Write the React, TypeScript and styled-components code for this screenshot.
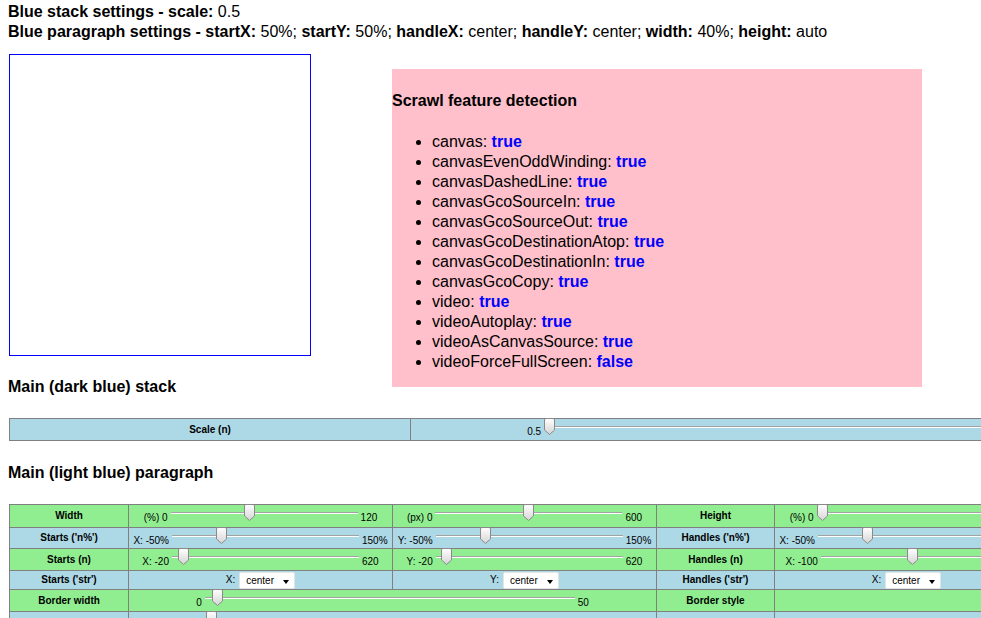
import React from "react";
import styled, { createGlobalStyle } from "styled-components";

const GlobalStyle = createGlobalStyle`
  html, body { margin: 0; padding: 0; background: #fff; overflow: hidden; }
  body { font-family: "Liberation Sans", Arial, sans-serif; color: #000; }
`;

const Page = styled.div`
  padding: 2px 8px 0;
`;

const Settings = styled.div`
  font-size: 16px;
  line-height: 20px;
  white-space: nowrap;
`;

const Key = styled.b`
  font-weight: bold;
`;

const CanvasRow = styled.div`
  display: flex;
  align-items: flex-start;
  height: 302px;
  margin-top: 12px;
`;

const Canvas = styled.div`
  width: 302px;
  height: 302px;
  box-sizing: border-box;
  border: 1px solid #0000ff;
  margin-left: 1px;
  flex-shrink: 0;
`;

const FeaturePanel = styled.div`
  flex-shrink: 0;
  width: 530px;
  margin: 15px 0 0 81px;
  padding: 22px 0 15px;
  background: #ffc0cb;
  font-size: 16px;
`;

const PanelTitle = styled.h4`
  margin: 0 0 21px;
  font-size: 16px;
  line-height: 20px;
  font-weight: bold;
`;

const FeatureList = styled.ul`
  margin: 0;
  padding-left: 40px;
  list-style: disc;
`;

const FeatureItem = styled.li`
  line-height: 20px;
`;

const Flag = styled.b`
  color: #0000ff;
`;

const SectionTitle = styled.h4<{ $before?: number; $after?: number }>`
  margin: ${(p) => p.$before ?? 21}px 0 ${(p) => p.$after ?? 21}px;
  font-size: 16px;
  line-height: 20px;
  font-weight: bold;
  white-space: nowrap;
`;

const ControlGrid = styled.div<{ $cols: string; $rows: string }>`
  display: grid;
  grid-template-columns: ${(p) => p.$cols};
  grid-template-rows: ${(p) => p.$rows};
  width: max-content;
  margin-left: 1px;
  border-top: 1px solid #808080;
  border-left: 1px solid #808080;
  font-size: 10px;
`;

const Cell = styled.div<{ $tone: "green" | "blue"; $span?: number; $slider?: boolean }>`
  box-sizing: border-box;
  grid-column: span ${(p) => p.$span ?? 1};
  display: flex;
  justify-content: center;
  align-items: ${(p) => (p.$slider ? "flex-start" : "center")};
  background: ${(p) => (p.$tone === "green" ? "#90ee90" : "#add8e6")};
  border-right: 1px solid #808080;
  border-bottom: 1px solid #808080;
  white-space: nowrap;
  min-width: 0;
`;

const LabelText = styled.span`
  font-weight: bold;
  font-size: 10px;
  line-height: 12px;
`;

const RangeText = styled.span`
  font-size: 10px;
  line-height: 12px;
  margin-top: 7px;
`;

const SliderBox = styled.div<{ $w: number }>`
  position: relative;
  flex-shrink: 0;
  width: ${(p) => p.$w}px;
  height: 17px;
  margin: -1px 3px 0;
`;

const Track = styled.div`
  position: absolute;
  left: 0;
  right: 0;
  top: 8px;
  height: 1px;
  background: #a3a3a3;
  border-bottom: 1px solid #ffffff;
`;

const ThumbIcon = styled.svg`
  position: absolute;
  top: 0;
  display: block;
`;

const AxisText = styled.span`
  font-size: 10px;
  line-height: 12px;
`;

const SelectBox = styled.div`
  display: flex;
  align-items: center;
  justify-content: space-between;
  box-sizing: border-box;
  width: 56px;
  height: 17px;
  margin: 1px 0 0 4px;
  padding: 0 5px 0 6px;
  background: #fff;
  border: 1px solid #e4e4e4;
  border-radius: 2px;
  font-size: 10px;
`;

const Caret = styled.span`
  width: 0;
  height: 0;
  margin-top: 3px;
  border-left: 3.5px solid transparent;
  border-right: 3.5px solid transparent;
  border-top: 4px solid #000;
`;

const THUMB_W = 11;

function Slider({ width, value }: { width: number; value: number }) {
  const left = value * (width - THUMB_W);
  return (
    <SliderBox $w={width}>
      <Track />
      <ThumbIcon width="11" height="17" viewBox="0 0 11 17" style={{ left }}>
        <defs>
          <linearGradient id="thumbFill" x1="0" y1="0" x2="0" y2="1">
            <stop offset="0" stopColor="#ffffff" />
            <stop offset="1" stopColor="#d4d4d4" />
          </linearGradient>
        </defs>
        <path
          d="M2 .5h7a1.5 1.5 0 0 1 1.5 1.5v10L5.5 16.5.5 12V2A1.5 1.5 0 0 1 2 .5z"
          fill="url(#thumbFill)"
          stroke="#8a8a8a"
        />
      </ThumbIcon>
    </SliderBox>
  );
}

type Tone = "green" | "blue";

function SliderCell({
  tone,
  min,
  max,
  value,
  width = 187,
  span,
}: {
  tone: Tone;
  min: string;
  max: string;
  value: number;
  width?: number;
  span?: number;
}) {
  return (
    <Cell $tone={tone} $slider $span={span}>
      <RangeText>{min}</RangeText>
      <Slider width={width} value={value} />
      <RangeText>{max}</RangeText>
    </Cell>
  );
}

function LabelCell({ tone, children }: { tone: Tone; children: React.ReactNode }) {
  return (
    <Cell $tone={tone}>
      <LabelText>{children}</LabelText>
    </Cell>
  );
}

function SelectCell({ tone, axis }: { tone: Tone; axis: string }) {
  return (
    <Cell $tone={tone}>
      <AxisText>{axis}:</AxisText>
      <SelectBox>
        <span>center</span>
        <Caret />
      </SelectBox>
    </Cell>
  );
}

const features: [string, boolean][] = [
  ["canvas", true],
  ["canvasEvenOddWinding", true],
  ["canvasDashedLine", true],
  ["canvasGcoSourceIn", true],
  ["canvasGcoSourceOut", true],
  ["canvasGcoDestinationAtop", true],
  ["canvasGcoDestinationIn", true],
  ["canvasGcoCopy", true],
  ["video", true],
  ["videoAutoplay", true],
  ["videoAsCanvasSource", true],
  ["videoForceFullScreen", false],
];

export default function App() {
  return (
    <>
      <GlobalStyle />
      <Page>
        <Settings>
          <div>
            <Key>Blue stack settings - scale:</Key> 0.5
          </div>
          <div>
            <Key>Blue paragraph settings - startX:</Key> 50%; <Key>startY:</Key> 50%;{" "}
            <Key>handleX:</Key> center; <Key>handleY:</Key> center; <Key>width:</Key> 40%;{" "}
            <Key>height:</Key> auto
          </div>
        </Settings>

        <CanvasRow>
          <Canvas />
          <FeaturePanel>
            <PanelTitle>Scrawl feature detection</PanelTitle>
            <FeatureList>
              {features.map(([name, ok]) => (
                <FeatureItem key={name}>
                  {name}: <Flag>{ok ? "true" : "false"}</Flag>
                </FeatureItem>
              ))}
            </FeatureList>
          </FeaturePanel>
        </CanvasRow>

        <SectionTitle>Main (dark blue) stack</SectionTitle>
        <ControlGrid $cols="401px 899px" $rows="22px">
          <LabelCell tone="blue">Scale (n)</LabelCell>
          <SliderCell tone="blue" min="0.5" max="5" value={0} width={640} />
        </ControlGrid>

        <SectionTitle $before={22} $after={21}>Main (light blue) paragraph</SectionTitle>
        <ControlGrid
          $cols="119px 264px 264px 118px 264px 264px"
          $rows="23px 21px 22px 19px 22px 22px"
        >
          <LabelCell tone="green">Width</LabelCell>
          <SliderCell tone="green" min="(%) 0" max="120" value={50 / 120} />
          <SliderCell tone="green" min="(px) 0" max="600" value={0.5} />
          <LabelCell tone="green">Height</LabelCell>
          <SliderCell tone="green" min="(%) 0" max="120" value={0} />
          <SliderCell tone="green" min="(px) 0" max="600" value={0} />

          <LabelCell tone="blue">Starts ('n%')</LabelCell>
          <SliderCell tone="blue" min="X: -50%" max="150%" value={0.25} />
          <SliderCell tone="blue" min="Y: -50%" max="150%" value={0.25} />
          <LabelCell tone="blue">Handles ('n%')</LabelCell>
          <SliderCell tone="blue" min="X: -50%" max="150%" value={0.25} />
          <SliderCell tone="blue" min="Y: -50%" max="150%" value={0.25} />

          <LabelCell tone="green">Starts (n)</LabelCell>
          <SliderCell tone="green" min="X: -20" max="620" value={20 / 640} />
          <SliderCell tone="green" min="Y: -20" max="620" value={20 / 640} />
          <LabelCell tone="green">Handles (n)</LabelCell>
          <SliderCell tone="green" min="X: -100" max="100" value={0.49} />
          <SliderCell tone="green" min="Y: -100" max="100" value={0.49} />

          <LabelCell tone="blue">Starts ('str')</LabelCell>
          <SelectCell tone="blue" axis="X" />
          <SelectCell tone="blue" axis="Y" />
          <LabelCell tone="blue">Handles ('str')</LabelCell>
          <SelectCell tone="blue" axis="X" />
          <SelectCell tone="blue" axis="Y" />

          <LabelCell tone="green">Border width</LabelCell>
          <SliderCell tone="green" min="0" max="50" value={1 / 50} width={370} span={2} />
          <LabelCell tone="green">Border style</LabelCell>
          <Cell $tone="green" $span={2} />

          <LabelCell tone="blue">Border radius</LabelCell>
          <SliderCell tone="blue" min="0" max="100" value={0.01} width={370} span={2} />
          <LabelCell tone="blue">Border color</LabelCell>
          <Cell $tone="blue" $span={2} />
        </ControlGrid>
      </Page>
    </>
  );
}
